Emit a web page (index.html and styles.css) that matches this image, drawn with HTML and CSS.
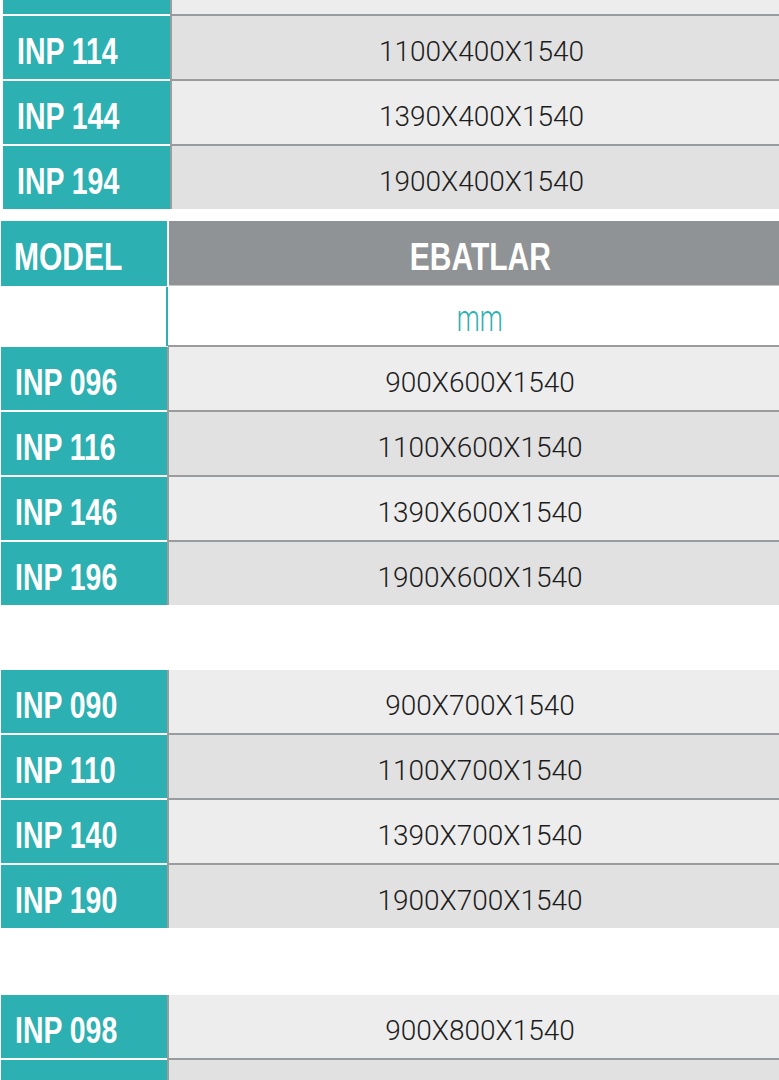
FILE: index.html
```html
<!DOCTYPE html>
<html lang="tr">
<head>
<meta charset="utf-8">
<title>INP Ebatlar</title>
<link rel="stylesheet" href="styles.css">
</head>
<body>
<div class="page">
  <div class="tbl tbl-top">
    <div class="row partial"><div class="model"></div><div class="size"></div></div>
    <div class="row"><div class="model"><span class="nar">INP 114</span></div><div class="size">1100X400X1540</div></div>
    <div class="row"><div class="model"><span class="nar">INP 144</span></div><div class="size">1390X400X1540</div></div>
    <div class="row"><div class="model"><span class="nar">INP 194</span></div><div class="size">1900X400X1540</div></div>
  </div>

  <div class="head">
    <div class="h-model"><span class="nar">MODEL</span></div>
    <div class="h-size"><span class="nar mid">EBATLAR</span></div>
  </div>
  <div class="unit">
    <div class="u-left"></div>
    <div class="u-right"><span class="unit-text">mm</span></div>
  </div>

  <div class="tbl">
    <div class="row"><div class="model"><span class="nar">INP 096</span></div><div class="size">900X600X1540</div></div>
    <div class="row"><div class="model"><span class="nar">INP 116</span></div><div class="size">1100X600X1540</div></div>
    <div class="row"><div class="model"><span class="nar">INP 146</span></div><div class="size">1390X600X1540</div></div>
    <div class="row"><div class="model"><span class="nar">INP 196</span></div><div class="size">1900X600X1540</div></div>
  </div>

  <div class="tbl gap">
    <div class="row"><div class="model"><span class="nar">INP 090</span></div><div class="size">900X700X1540</div></div>
    <div class="row"><div class="model"><span class="nar">INP 110</span></div><div class="size">1100X700X1540</div></div>
    <div class="row"><div class="model"><span class="nar">INP 140</span></div><div class="size">1390X700X1540</div></div>
    <div class="row"><div class="model"><span class="nar">INP 190</span></div><div class="size">1900X700X1540</div></div>
  </div>

  <div class="tbl gap gap-last">
    <div class="row"><div class="model"><span class="nar">INP 098</span></div><div class="size">900X800X1540</div></div>
    <div class="row"><div class="model"></div><div class="size"></div></div>
  </div>
</div>
</body>
</html>
```
FILE: styles.css
```css
html, body {
  margin: 0;
  padding: 0;
  background: #ffffff;
}

.page {
  width: 779px;
  height: 1080px;
  overflow: hidden;
}

.tbl {
  display: flex;
  flex-direction: column;
  padding-left: 1px;
}

.tbl-top {
  padding-left: 3px;
}

.gap {
  margin-top: 65px;
}

.gap-last {
  margin-top: 67px;
}

.row {
  display: flex;
  height: 63px;
  flex: none;
}

.row + .row {
  height: 65px;
}

.row.partial {
  height: 14px;
}

.nar {
  display: inline-block;
  transform: scaleX(0.79);
  transform-origin: 0 50%;
}

.nar.mid {
  transform-origin: 50% 50%;
}

.model {
  width: 166px;
  flex: none;
  box-sizing: border-box;
  background: #2cb0b1;
  color: #ffffff;
  font-family: "Liberation Sans", Arial, sans-serif;
  font-weight: 700;
  font-size: 36px;
  padding: 8px 0 0 14px;
  display: flex;
  align-items: center;
  white-space: nowrap;
}

.tbl-top .model {
  width: 167px;
}

.size {
  flex: 1;
  box-sizing: border-box;
  border-left: 2px solid #9a9c9d;
  display: flex;
  align-items: center;
  justify-content: center;
  padding: 8px 0 0 12px;
  font-family: Roboto, "Liberation Sans", sans-serif;
  font-weight: 300;
  font-size: 28px;
  color: #1c1c1c;
  white-space: nowrap;
}

.row:nth-child(odd) .size {
  background: #ededed;
}

.row:nth-child(even) .size {
  background: #e1e1e1;
}

.row + .row .model {
  border-top: 2px solid #ffffff;
}

.row + .row .size {
  border-top: 2px solid #999b9c;
}

.head {
  display: flex;
  gap: 2px;
  height: 65px;
  margin-top: 12px;
  padding-left: 1px;
}

.h-model,
.h-size {
  box-sizing: border-box;
  display: flex;
  align-items: center;
  color: #ffffff;
  font-family: "Liberation Sans", Arial, sans-serif;
  font-weight: 700;
  font-size: 38px;
  padding-top: 8px;
  white-space: nowrap;
}

.h-model {
  width: 166px;
  flex: none;
  background: #2cb0b1;
  padding-left: 13px;
}

.h-size {
  flex: 1;
  background: #909395;
  justify-content: center;
  padding-left: 12px;
  border-bottom: 1px solid #c4c6c7;
}

.unit {
  display: flex;
  height: 61px;
}

.u-left {
  width: 168px;
  flex: none;
  box-sizing: border-box;
  border-right: 2px solid #2cb0b1;
  margin-top: 1px;
  margin-bottom: 1px;
}

.u-right {
  flex: 1;
  box-sizing: border-box;
  border-bottom: 2px solid #999b9c;
  display: flex;
  align-items: center;
  justify-content: center;
  padding: 6px 0 0 12px;
  color: #2cb0b1;
  font-family: Roboto, "Liberation Sans", sans-serif;
  font-weight: 300;
  font-size: 37px;
}

.unit-text {
  display: inline-block;
  transform: scaleX(0.7);
  transform-origin: 50% 50%;
}
```
